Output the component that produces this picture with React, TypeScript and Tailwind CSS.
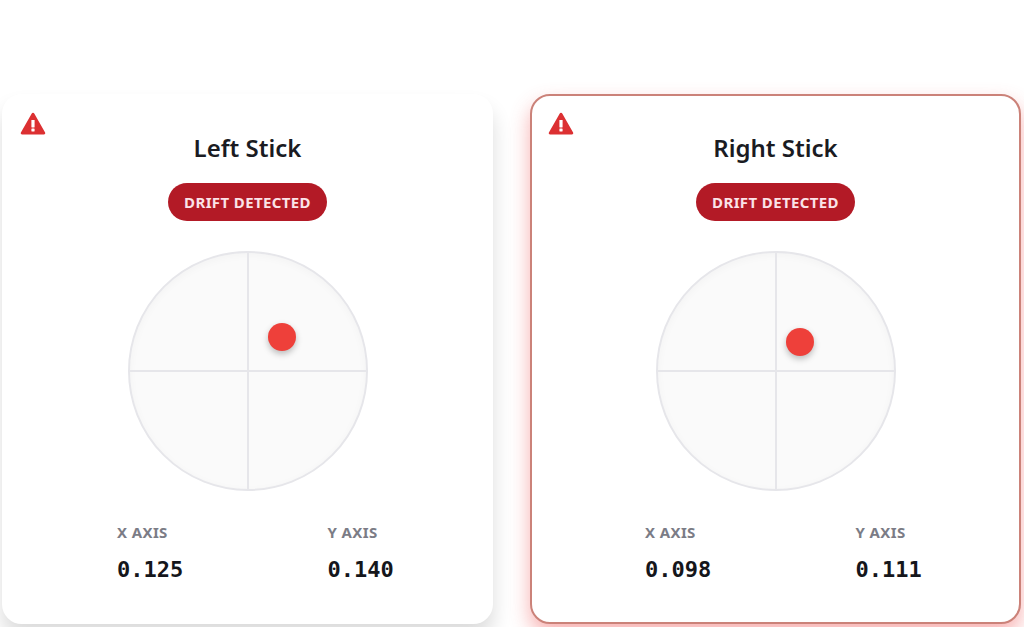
import React from 'react';

interface Stick {
  name: string;
  x: string;
  y: string;
  // Dot position inside the pad, in percent
  dot: { left: number; top: number };
  active: boolean;
}

const STICKS: Stick[] = [
  { name: 'Left Stick', x: '0.125', y: '0.140', dot: { left: 64.5, top: 35.5 }, active: false },
  { name: 'Right Stick', x: '0.098', y: '0.111', dot: { left: 60.5, top: 37.5 }, active: true },
];

const WarningIcon = () => (
  <svg viewBox="0 0 26 24" className="absolute top-4 left-4 w-[26px] h-6" aria-hidden="true">
    <path
      d="M11.6 1.7a1.6 1.6 0 0 1 2.8 0l10.7 18.9c.5 1-.1 1.9-1.2 1.9H2.1c-1.1 0-1.7-.9-1.2-1.9z"
      fill="#dc3032"
    />
    <rect x="11.4" y="8" width="3.2" height="7.4" rx="0.4" fill="#fff" />
    <rect x="11.4" y="16.6" width="3.2" height="2.8" rx="0.4" fill="#fff" />
  </svg>
);

const Axis = ({ label, value }: { label: string; value: string }) => (
  <div className="pl-20">
    <dt className="text-[15px] leading-5 font-bold tracking-wide text-[#7b7c86]">{label}</dt>
    <dd className="mt-3 font-['DejaVu_Sans_Mono',monospace] text-[22px] leading-8 font-bold text-[#15161b]">
      {value}
    </dd>
  </div>
);

const StickCard = ({ stick }: { stick: Stick }) => (
  <section
    className={`relative flex flex-col items-center rounded-[20px] border-2 bg-white pt-9 pb-9 ${
      stick.active
        ? 'border-[#cb8279] shadow-[0_10px_20px_rgba(239,68,68,0.42)]'
        : 'border-white shadow-[0_14px_20px_rgba(0,0,0,0.14)]'
    }`}
  >
    <WarningIcon />
    <h2 className="text-2xl leading-8 font-semibold text-[#1a1b22]">{stick.name}</h2>
    <span className="mt-[19px] rounded-full bg-[#b31a26] px-4 py-[9px] text-[15px] leading-5 font-bold tracking-wide text-[#fbe3e8]">
      DRIFT DETECTED
    </span>

    {/* Stick pad */}
    <div className="relative mt-[30px] size-60 rounded-full border-2 border-[#e6e6ea] bg-[#fafafa] shadow-[inset_0_2px_8px_rgba(0,0,0,0.03)]">
      <div className="absolute inset-y-0 left-1/2 w-0.5 -translate-x-1/2 bg-[#e6e6ea]" />
      <div className="absolute inset-x-0 top-1/2 h-0.5 -translate-y-1/2 bg-[#e6e6ea]" />
      <div
        className="absolute size-7 -translate-1/2 rounded-full bg-[#ee403a] shadow-[0_3px_6px_rgba(0,0,0,0.25)]"
        style={{ left: `${stick.dot.left}%`, top: `${stick.dot.top}%` }}
      />
    </div>

    <dl className="mt-[31px] grid w-full grid-cols-2 px-[33px]">
      <Axis label="X AXIS" value={stick.x} />
      <Axis label="Y AXIS" value={stick.y} />
    </dl>
  </section>
);

export default function App() {
  return (
    <main className="grid min-h-screen grid-cols-2 items-start gap-[37px] overflow-hidden bg-white pt-[94px] pr-[3px] pl-0.5 font-['Noto_Sans',sans-serif]">
      {STICKS.map((stick) => (
        <StickCard key={stick.name} stick={stick} />
      ))}
    </main>
  );
}
